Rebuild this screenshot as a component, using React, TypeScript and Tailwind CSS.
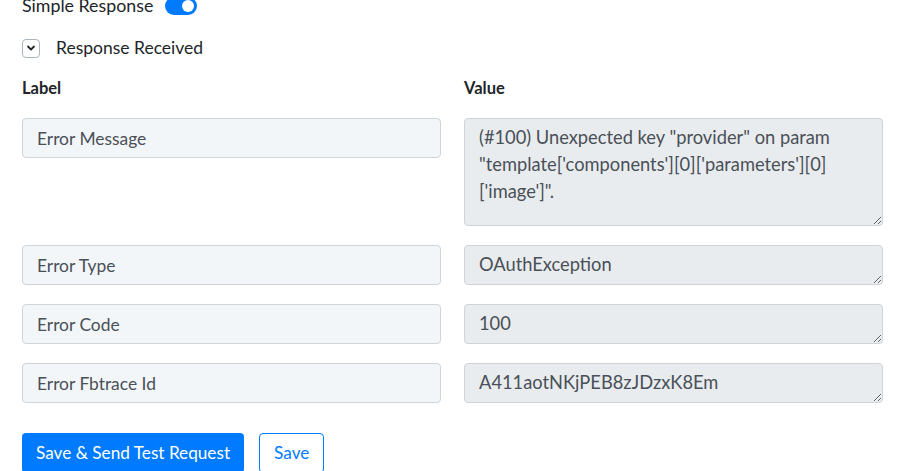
import { useState } from 'react'

const rows = [
  { label: 'Error Type', value: 'OAuthException' },
  { label: 'Error Code', value: '100' },
  { label: 'Error Fbtrace Id', value: 'A411aotNKjPEB8zJDzxK8Em' },
]

const font = { fontFamily: 'Lato, "Noto Sans", sans-serif' }

const labelInput =
  'w-full h-[40px] px-[14px] bg-[#f3f6f9] border border-[#ced4da] rounded-[4px] text-[17.4px] text-[#495057] outline-none'
const valueArea =
  'block w-full px-[14px] py-[5px] bg-[#e9ecef] border border-[#ced4da] rounded-[4px] text-[18.3px] leading-[27px] text-[#495057] outline-none'

export default function App() {
  const [simple, setSimple] = useState(true)

  return (
    <div className="min-h-screen bg-white text-[#212529] pl-[22px] pr-[31px]" style={font}>
      {/* Simple response toggle */}
      <div className="flex items-center gap-[12px] h-[14px] -mt-[1px]">
        <span className="text-[17.8px] leading-none">Simple Response</span>
        <button
          onClick={() => setSimple(!simple)}
          className={`relative w-[32px] h-[18px] rounded-full ${simple ? 'bg-[#007bff]' : 'bg-gray-300'}`}
        >
          <span className={`absolute top-[3px] w-[12px] h-[12px] rounded-full bg-white ${simple ? 'right-[3px]' : 'left-[3px]'}`} />
        </button>
      </div>

      {/* Response received */}
      <div className="flex items-center gap-[16px] mt-[22px]">
        <span className="flex items-center justify-center w-[18px] h-[19px] border border-[#adb5bd] rounded-[4px]">
          <svg width="10" height="10" viewBox="0 0 10 10" fill="none">
            <path d="M2 3.5 L5 6.5 L8 3.5" stroke="#212529" strokeWidth="1.8" strokeLinecap="round" strokeLinejoin="round" />
          </svg>
        </span>
        <span className="text-[17.5px]">Response Received</span>
      </div>

      {/* Headers */}
      <div className="grid grid-cols-2 gap-x-[23px] mt-[15px]">
        <div className="text-[16.5px] font-bold">Label</div>
        <div className="text-[16.5px] font-bold">Value</div>
      </div>

      <div className="grid grid-cols-2 gap-x-[23px] gap-y-[19px] mt-[17px]">
        <div>
          <input readOnly value="Error Message" className={labelInput} style={font} />
        </div>
        <textarea
          readOnly
          value={`(#100) Unexpected key "provider" on param "template['components'][0]['parameters'][0]['image']".`}
          className={`${valueArea} h-[108px]`}
          style={font}
        />
        {rows.map((r) => [
          <input key={r.label} readOnly value={r.label} className={labelInput} style={font} />,
          <textarea key={r.value} readOnly value={r.value} className={`${valueArea} h-[40px]`} style={font} />,
        ])}
      </div>

      {/* Actions */}
      <div className="flex gap-[15px] mt-[30px]">
        <button className="h-[40px] px-[14px] bg-[#007bff] text-white text-[17.2px] rounded-[4px]" style={font}>
          Save &amp; Send Test Request
        </button>
        <button className="h-[40px] px-[14px] border border-[#007bff] text-[#007bff] text-[17.2px] rounded-[4px] bg-white" style={font}>
          Save
        </button>
      </div>
    </div>
  )
}
